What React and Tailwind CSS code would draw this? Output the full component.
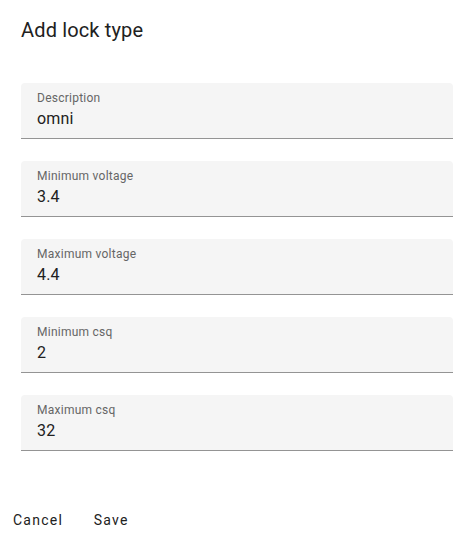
import React from 'react';

const FIELDS = [
  { label: 'Description', value: 'omni' },
  { label: 'Minimum voltage', value: '3.4' },
  { label: 'Maximum voltage', value: '4.4' },
  { label: 'Minimum csq', value: '2' },
  { label: 'Maximum csq', value: '32' },
];

function Field({ label, value }) {
  return (
    <div className="h-14 rounded-t-[4px] bg-[#f5f5f5] border-b border-[#949494] px-4 relative">
      <label className="absolute left-4 top-[7px] text-[12px] leading-[17px] tracking-[0.25px] text-[#666666]">
        {label}
      </label>
      <div className="pt-[24px] text-[16px] leading-[23px] tracking-[0.15px] text-[#212121]">{value}</div>
    </div>
  );
}

export default function App() {
  return (
    <div
      className="w-[473px] h-[542px] bg-white flex flex-col"
      style={{ fontFamily: 'Roboto, "Liberation Sans", sans-serif' }}
    >
      {/* Title */}
      <h2 className="pt-[14px] pl-[21px] text-[20px] leading-8 font-normal tracking-[0.15px] text-[#212121]">
        Add lock type
      </h2>

      {/* Fields */}
      <div className="mt-[37px] ml-[21px] w-[432px] flex flex-col gap-[22px]">
        {FIELDS.map(f => (
          <Field key={f.label} label={f.label} value={f.value} />
        ))}
      </div>

      {/* Actions */}
      <div className="mt-[51px] pl-[5px] flex gap-[8px]">
        <button className="min-w-16 h-9 px-2 text-[14px] tracking-[1.25px] text-[#212121] font-normal">
          Cancel
        </button>
        <button className="min-w-16 h-9 px-2 text-[14px] tracking-[1.25px] text-[#212121] font-normal">
          Save
        </button>
      </div>
    </div>
  );
}
